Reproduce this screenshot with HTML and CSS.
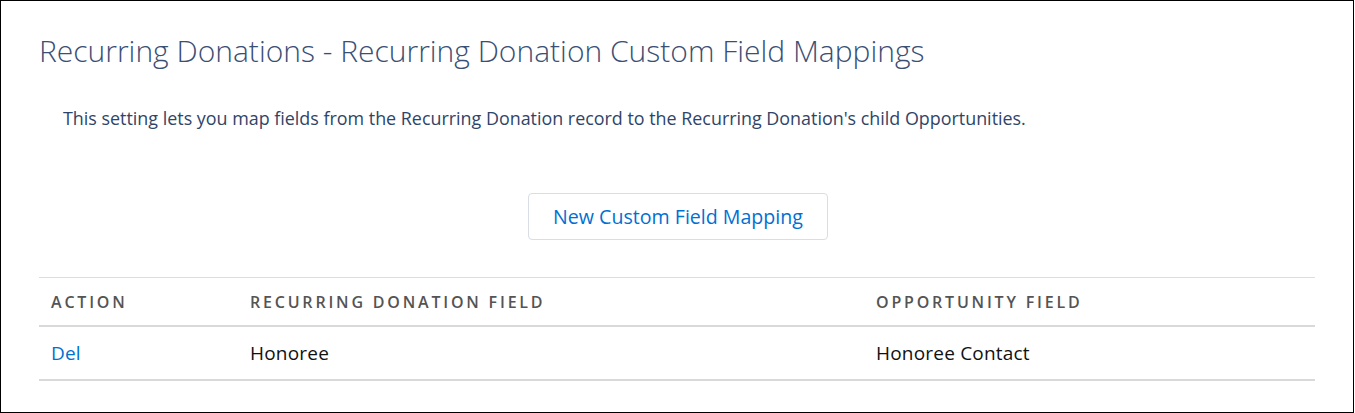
FILE: index.html
```html
<!DOCTYPE html>
<html lang="en">
<head>
    <meta charset="UTF-8">
    <title>Recurring Donation Custom Field Mappings</title>
    <link rel="stylesheet" href="styles.css">
</head>
<body>
    <div class="settings-page">
        <h1 class="page-title">Recurring Donations - Recurring Donation Custom Field Mappings</h1>
        <p class="page-desc">This setting lets you map fields from the Recurring Donation record to the Recurring Donation's child Opportunities.</p>

        <div class="actions">
            <button class="btn">New Custom Field Mapping</button>
        </div>

        <div class="mapping-table">
            <div class="row head">
                <div class="cell">Action</div>
                <div class="cell">Recurring Donation Field</div>
                <div class="cell">Opportunity Field</div>
            </div>
            <div class="row">
                <div class="cell"><a href="#" class="link">Del</a></div>
                <div class="cell">Honoree</div>
                <div class="cell">Honoree Contact</div>
            </div>
        </div>
    </div>
</body>
</html>
```

FILE: styles.css
```css
* {
    margin: 0;
    padding: 0;
    box-sizing: border-box;
}

body {
    font-family: "Open Sans", Lato, sans-serif;
    background: white;
}

.settings-page {
    width: 1354px;
    height: 413px;
    border: 1px solid #000;
    padding: 0 38px;
}

.page-title {
    font-size: 30px;
    font-weight: 300;
    color: #3a4f74;
    line-height: 34px;
    margin-top: 33px;
}

.page-desc {
    font-size: 17.9px;
    color: #2f4468;
    line-height: 20px;
    margin-top: 40px;
    padding-left: 24px;
}

.actions {
    display: flex;
    justify-content: center;
    margin-top: 65px;
    padding-left: 2px;
}

.btn {
    width: 300px;
    height: 47px;
    background: white;
    border: 1px solid #d8dde6;
    border-radius: 4px;
    color: #0070d2;
    font-family: inherit;
    font-size: 19.6px;
    cursor: pointer;
}

.mapping-table {
    margin-top: 37px;
    width: 1276px;
    border-top: 1px solid #dddddd;
}

.row {
    display: grid;
    grid-template-columns: 199px 626px 1fr;
    border-bottom: 2px solid #d9d9d9;
    height: 54px;
    align-items: center;
}

.row.head {
    height: 49px;
}

.cell {
    padding: 0 12px;
    font-size: 19px;
    letter-spacing: 0.2px;
    color: #111111;
}

.head .cell {
    font-size: 16px;
    font-weight: 600;
    text-transform: uppercase;
    letter-spacing: 2.8px;
    color: #545454;
}

.link {
    color: #0070d2;
    text-decoration: none;
}
```
